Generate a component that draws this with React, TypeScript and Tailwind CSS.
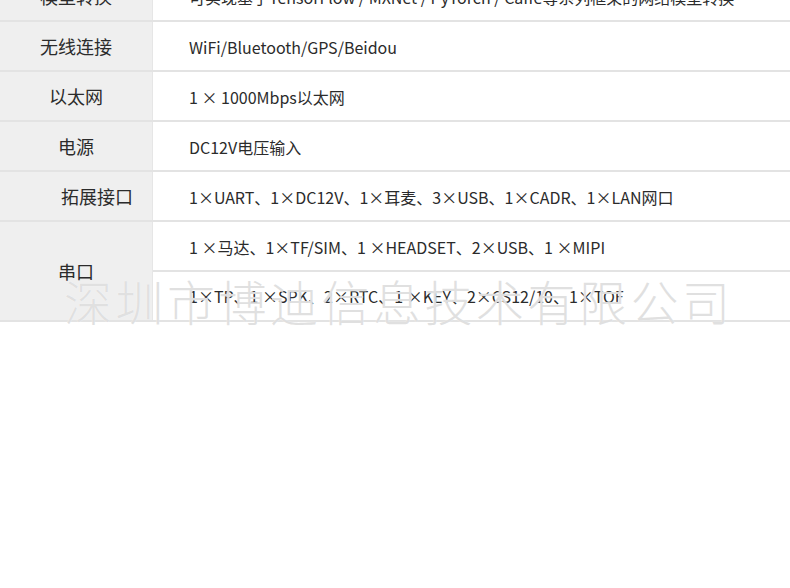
import { ReactNode } from "react";

const font = { fontFamily: '"Noto Sans CJK SC", "Noto Sans", sans-serif' };

function Row({ label, children, labelClass = "" }: { label: string; children: ReactNode; labelClass?: string }) {
  return (
    <div className="flex h-[50px] border-b-2 border-[#e3e3e3]">
      <div className="w-[153px] shrink-0 bg-[#efefef] border-r border-[#e6e6e6] flex items-center justify-center pt-[1px]">
        <span className={`text-[18px] text-[#2b2b2b] ${labelClass}`}>{label}</span>
      </div>
      <div className="flex-1 flex items-center pl-[36px] pt-[1px] text-[16px] text-[#2b2b2b] whitespace-nowrap">{children}</div>
    </div>
  );
}

export default function App() {
  return (
    <div className="w-[790px] h-[588px] bg-white overflow-hidden" style={font}>
      <div className="relative -mt-[28px]">
        <Row label="模型转换">
          可实现基于TensorFlow / MXNet / PyTorch / Caffe等系列框架的网络模型转换
        </Row>
        <Row label="无线连接">WiFi/Bluetooth/GPS/Beidou</Row>
        <Row label="以太网">1 × 1000Mbps以太网</Row>
        <Row label="电源">DC12V电压输入</Row>
        <Row label="拓展接口" labelClass="ml-[42px]">
          1×UART、1×DC12V、1×耳麦、3×USB、1×CADR、1×LAN网口
        </Row>

        {/* 串口: two sub rows */}
        <div className="flex h-[100px] border-b-2 border-[#e3e3e3]">
          <div className="w-[153px] shrink-0 bg-[#efefef] border-r border-[#e6e6e6] flex items-center justify-center">
            <span className="text-[18px] text-[#2b2b2b]">串口</span>
          </div>
          <div className="flex-1 flex flex-col text-[16px] text-[#2b2b2b] whitespace-nowrap">
            <div className="h-[50px] flex items-center pl-[36px] pt-[1px] border-b-2 border-[#e3e3e3]">
              1 ×马达、1×TF/SIM、1 ×HEADSET、2×USB、1 ×MIPI
            </div>
            <div className="flex-1 flex items-center pl-[36px]">
              1×TP、1 ×SPK、2×RTC、1 ×KEY、2×CS12/10、1×TOF
            </div>
          </div>
        </div>

        {/* watermark */}
        <div
          className="absolute left-[64px] top-[304px] text-[48px] leading-none tracking-[3.5px] font-light text-[#cccccc]/60 whitespace-nowrap pointer-events-none"
          style={{ textShadow: "0 0 1px #fff" }}
        >
          深圳市博迪信息技术有限公司
        </div>
      </div>
    </div>
  );
}
